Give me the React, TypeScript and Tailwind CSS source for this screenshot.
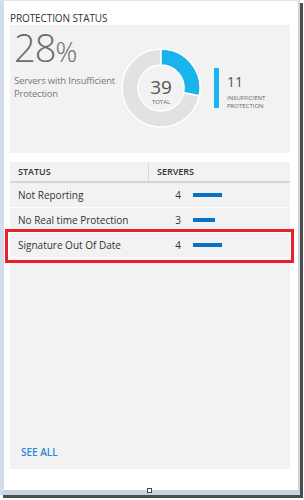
import React from 'react';

type Row = { label: string; count: number; highlight?: boolean };

const rows: Row[] = [
    { label: 'Not Reporting', count: 4 },
    { label: 'No Real time Protection', count: 3 },
    { label: 'Signature Out Of Date', count: 4, highlight: true },
];

const Donut: React.FC = () => (
    <div className="relative w-[80px] h-[80px]">
        <svg width="80" height="80" viewBox="0 0 80 80">
            <path
                d="M78.22 47.78 A39 39 0 1 1 40 1 L40 17 A23 23 0 1 0 62.54 44.59 Z"
                fill="#e2e2e2"
                stroke="#ffffff"
                strokeWidth="1.5"
            />
            <path
                d="M40 1 A39 39 0 0 1 78.22 47.78 L62.54 44.59 A23 23 0 0 0 40 17 Z"
                fill="#1ab4ec"
                stroke="#ffffff"
                strokeWidth="1.5"
            />
        </svg>
        <div className="absolute inset-0 flex flex-col items-center justify-center pt-[6px]">
            <span className="text-[19px] leading-[22px] text-[#555]">39</span>
            <span className="text-[6px] leading-[8px] text-[#666]">TOTAL</span>
        </div>
    </div>
);

const App: React.FC = () => {
    return (
        <div className="w-[304px] h-[500px] bg-white" style={{ fontFamily: '"Open Sans", "Liberation Sans", sans-serif' }}>
            <div className="w-[300px] h-[495px] border-l-4 border-l-[#d3dceb] border-t border-t-[#dfe4ec] border-r-2 border-r-[#d0d5dc] border-b-[5px] border-b-[#c9d3e2] shadow-[3px_3px_0_#4d4d4d] bg-white">
                <div className="pl-[6px] pr-[8px] pt-[11px] flex flex-col h-full pb-[21px]">
                    <h1 className="text-[10px] leading-[13px] text-[#333] tracking-[-0.1px]">PROTECTION STATUS</h1>

                    {/* summary */}
                    <div className="bg-[#f2f2f2] h-[128px] flex items-start">
                        <div className="w-[111px] pl-[4px] pt-[4px]">
                            <div className="text-[#6b6b6b] font-light leading-[36px]">
                                <span className="text-[38px] tracking-[-1px]">28</span>
                                <span className="text-[27px]">%</span>
                            </div>
                            <p className="text-[9.5px] leading-[13px] text-[#777] whitespace-nowrap tracking-[-0.2px]">
                                Servers with Insufficient
                                <br />
                                Protection
                            </p>
                        </div>
                        <div className="mt-[23px]">
                            <Donut />
                        </div>
                        <div className="mt-[43px] ml-[13px] flex items-start">
                            <div className="w-[5px] h-[40px] bg-[#1ab4ec]" />
                            <div className="ml-[8px] pt-[6px]">
                                <div className="text-[14px] leading-[16px] text-[#555]">11</div>
                                <div className="text-[6px] leading-[7.5px] text-[#666] mt-[5px]">
                                    INSUFFICIENT
                                    <br />
                                    PROTECTION
                                </div>
                            </div>
                        </div>
                    </div>

                    {/* table */}
                    <div className="relative mt-[9px] bg-[#f2f2f2] flex-1 flex flex-col">
                        <div className="flex h-[21px] border-b-2 border-[#d4d4d4] text-[9px] font-semibold text-[#333]">
                            <div className="w-[139px] pl-[8px] flex items-center border-r border-[#dadada]">STATUS</div>
                            <div className="pl-[8px] flex items-center">SERVERS</div>
                        </div>
                        {rows.map(r => (
                            <div key={r.label} className="flex items-center h-[25px] border-b border-white text-[10px] text-[#333]">
                                <div className="w-[150px] pl-[8px]">{r.label}</div>
                                <div className="w-[21px] text-right">{r.count}</div>
                                <div className="ml-[12px] h-[4px] bg-[#0a72c6]" style={{ width: r.count === 4 ? 29 : 22 }} />
                            </div>
                        ))}
                        <div className="absolute left-[-5px] top-[67px] w-[289px] h-[34px] border-[3px] border-[#e8202a]" />
                        <div className="mt-auto pl-[11px] pb-[9px] text-[10px] font-semibold text-[#2b88d8]">SEE ALL</div>
                    </div>
                </div>
            </div>
            <div className="relative">
                <div className="absolute left-[147px] top-[-7px] w-[5px] h-[5px] bg-white border border-[#444]" />
            </div>
        </div>
    );
};

export default App;
